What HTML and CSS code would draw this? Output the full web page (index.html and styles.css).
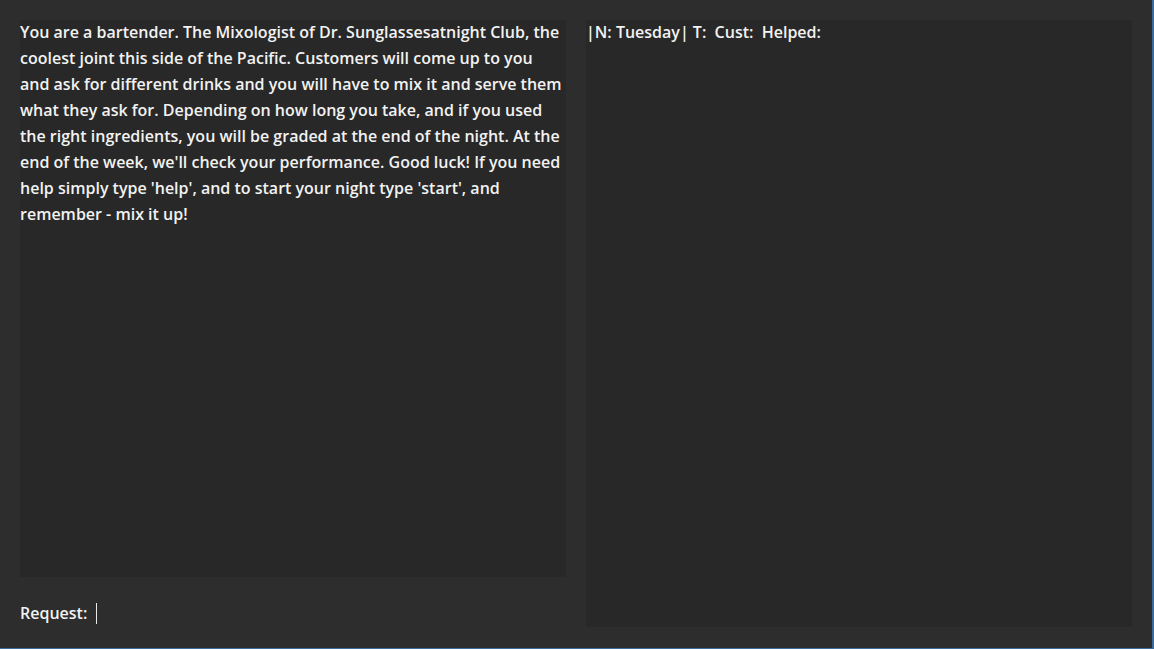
FILE: index.html
```html
<!DOCTYPE html>
<html>
<head>
<meta charset="utf-8">
<link rel="stylesheet" href="styles.css">
</head>
<body>
<div class="app">
  <div class="col left">
    <div class="panel story"><div class="text">You are a bartender. The Mixologist of Dr. Sunglassesatnight Club, the coolest joint this side of the Pacific. Customers will come up to you and ask for different drinks and you will have to mix it and serve them what they ask for. Depending on how long you take, and if you used the right ingredients, you will be graded at the end of the night. At the end of the week, we'll check your performance. Good luck! If you need help simply type 'help', and to start your night type 'start', and remember - mix it up!</div></div>
    <div class="request"><span class="label">Request:</span><span class="caret"></span></div>
  </div>
  <div class="col right">
    <div class="panel status"><div class="text">|N: Tuesday| T:&nbsp; Cust:&nbsp; Helped:</div></div>
  </div>
</div>
</body>
</html>
```

FILE: styles.css
```css
html, body {
  margin: 0;
  padding: 0;
  background: #2d2d2d;
}
body {
  width: 1154px;
  height: 649px;
  overflow: hidden;
  font-family: "Open Sans", "Noto Sans", sans-serif;
  font-weight: 600;
  font-size: 16px;
  line-height: 26px;
  color: #f2f2f2;
}
.app {
  box-sizing: border-box;
  width: 1154px;
  height: 649px;
  border-right: 2px solid #3b6b9c;
  border-bottom: 1px solid #3b6b9c;
  padding: 20px 20px 21px 20px;
  display: flex;
  gap: 20px;
}
.col {
  width: 546px;
  display: flex;
  flex-direction: column;
}
.panel {
  background: #282828;
}
.text {
  margin-top: -1px;
}
.story {
  height: 557px;
}
.status {
  height: 607px;
}
.request {
  display: flex;
  align-items: center;
  margin-top: 25px;
  height: 22px;
}
.caret {
  display: inline-block;
  width: 1px;
  height: 21px;
  background: #e8e8e8;
  margin-left: 9px;
}
```
